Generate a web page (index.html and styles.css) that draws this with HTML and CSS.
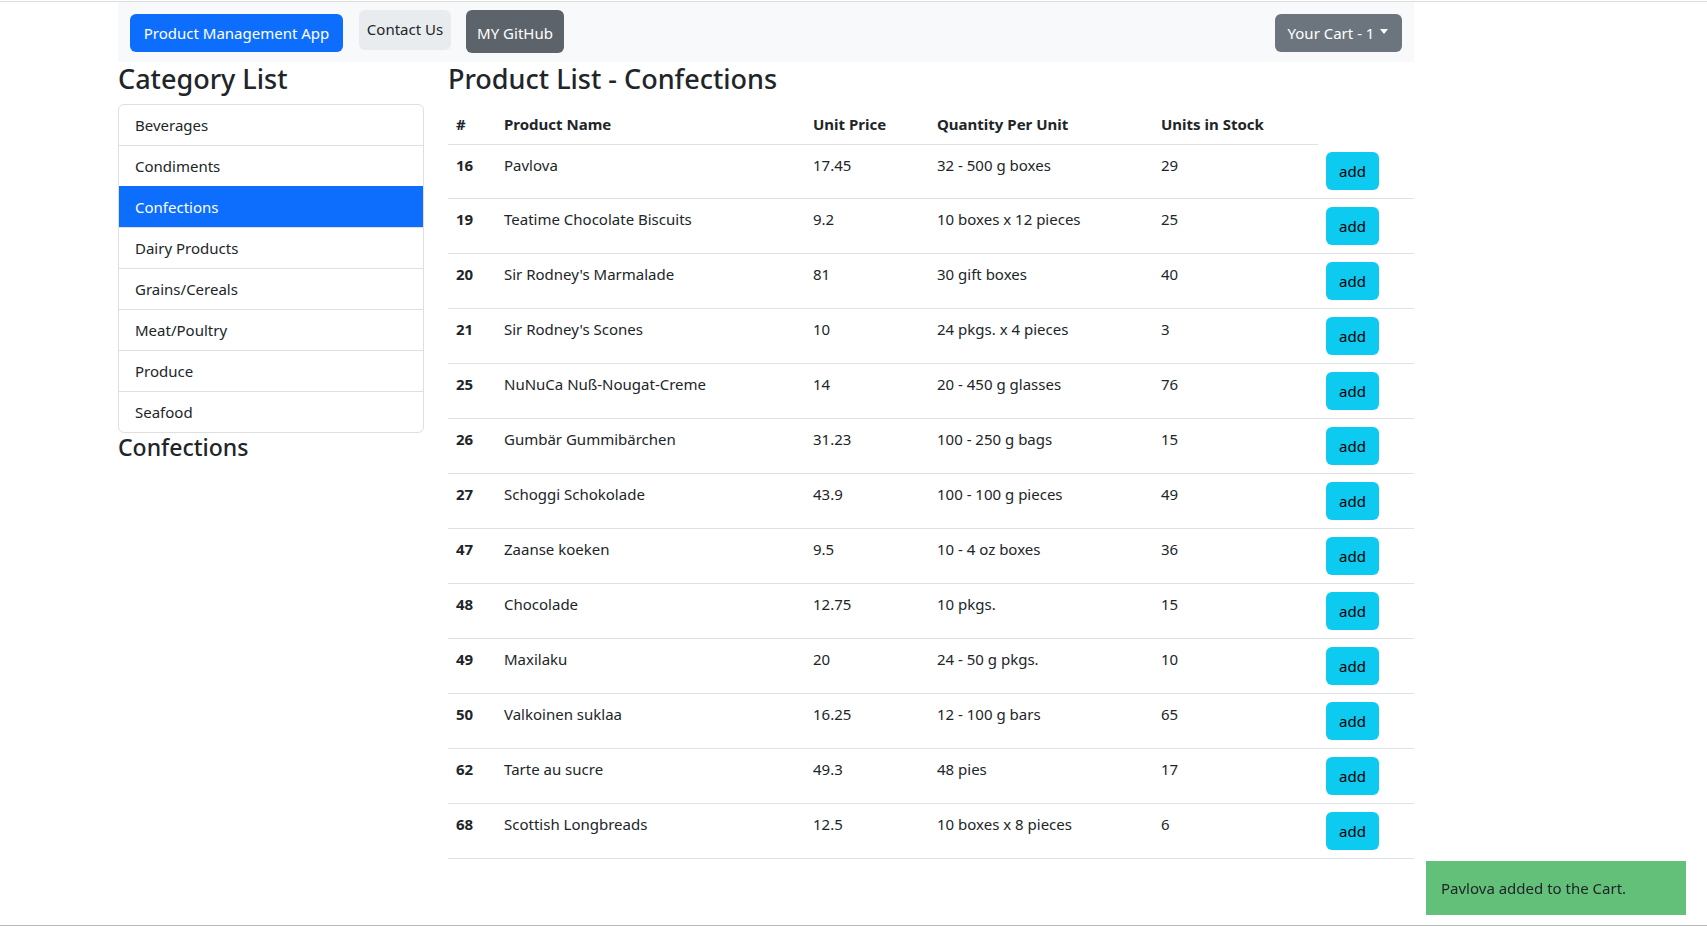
FILE: index.html
```html
<!DOCTYPE html>
<html lang="en">
<head>
<meta charset="utf-8">
<title>Product Management App</title>
<link rel="stylesheet" href="styles.css">
</head>
<body>
<div class="topline"></div>
<div class="page">
  <nav class="navbar">
    <a class="btn btn-brand">Product Management App</a>
    <a class="btn btn-contact">Contact Us</a>
    <a class="btn btn-github">MY GitHub</a>
    <div class="spacer"></div>
    <a class="btn btn-cart">Your Cart - 1<span class="caret"></span></a>
  </nav>
  <div class="row">
    <aside class="col-side">
      <h3 class="heading">Category List</h3>
      <ul class="list-group">
        <li class="list-item">Beverages</li>
        <li class="list-item">Condiments</li>
        <li class="list-item active">Confections</li>
        <li class="list-item">Dairy Products</li>
        <li class="list-item">Grains/Cereals</li>
        <li class="list-item">Meat/Poultry</li>
        <li class="list-item">Produce</li>
        <li class="list-item">Seafood</li>
      </ul>
      <h4 class="subheading">Confections</h4>
    </aside>
    <main class="col-main">
      <h3 class="heading">Product List - Confections</h3>
      <table class="table">
        <colgroup>
          <col class="c-id"><col class="c-name"><col class="c-price"><col class="c-qty"><col class="c-stock"><col class="c-add">
        </colgroup>
        <thead>
          <tr><th>#</th><th>Product Name</th><th>Unit Price</th><th>Quantity Per Unit</th><th>Units in Stock</th></tr>
        </thead>
        <tbody>
          <tr><th>16</th><td>Pavlova</td><td>17.45</td><td>32 - 500 g boxes</td><td>29</td><td><button class="btn-add">add</button></td></tr>
          <tr><th>19</th><td>Teatime Chocolate Biscuits</td><td>9.2</td><td>10 boxes x 12 pieces</td><td>25</td><td><button class="btn-add">add</button></td></tr>
          <tr><th>20</th><td>Sir Rodney's Marmalade</td><td>81</td><td>30 gift boxes</td><td>40</td><td><button class="btn-add">add</button></td></tr>
          <tr><th>21</th><td>Sir Rodney's Scones</td><td>10</td><td>24 pkgs. x 4 pieces</td><td>3</td><td><button class="btn-add">add</button></td></tr>
          <tr><th>25</th><td>NuNuCa Nuß-Nougat-Creme</td><td>14</td><td>20 - 450 g glasses</td><td>76</td><td><button class="btn-add">add</button></td></tr>
          <tr><th>26</th><td>Gumbär Gummibärchen</td><td>31.23</td><td>100 - 250 g bags</td><td>15</td><td><button class="btn-add">add</button></td></tr>
          <tr><th>27</th><td>Schoggi Schokolade</td><td>43.9</td><td>100 - 100 g pieces</td><td>49</td><td><button class="btn-add">add</button></td></tr>
          <tr><th>47</th><td>Zaanse koeken</td><td>9.5</td><td>10 - 4 oz boxes</td><td>36</td><td><button class="btn-add">add</button></td></tr>
          <tr><th>48</th><td>Chocolade</td><td>12.75</td><td>10 pkgs.</td><td>15</td><td><button class="btn-add">add</button></td></tr>
          <tr><th>49</th><td>Maxilaku</td><td>20</td><td>24 - 50 g pkgs.</td><td>10</td><td><button class="btn-add">add</button></td></tr>
          <tr><th>50</th><td>Valkoinen suklaa</td><td>16.25</td><td>12 - 100 g bars</td><td>65</td><td><button class="btn-add">add</button></td></tr>
          <tr><th>62</th><td>Tarte au sucre</td><td>49.3</td><td>48 pies</td><td>17</td><td><button class="btn-add">add</button></td></tr>
          <tr><th>68</th><td>Scottish Longbreads</td><td>12.5</td><td>10 boxes x 8 pieces</td><td>6</td><td><button class="btn-add">add</button></td></tr>
        </tbody>
      </table>
    </main>
  </div>
</div>
<div class="toast">Pavlova added to the Cart.</div>
<div class="bottomline"></div>
</body>
</html>
```

FILE: styles.css
```css
* { box-sizing: border-box; }
html, body { margin: 0; padding: 0; }
body {
  font-family: "Noto Sans", "Open Sans", sans-serif;
  font-size: 15px;
  line-height: 24px;
  color: #212529;
  background: #fff;
}
.topline { height: 1px; margin-top: 1px; background: #dcdcdc; }
.page { width: 1296px; margin-left: 118px; }

.navbar {
  display: flex;
  align-items: flex-start;
  height: 60px;
  padding: 0 12px;
  background: #f8f9fa;
}
.spacer { flex: 1; }
.btn {
  display: inline-flex;
  align-items: center;
  justify-content: center;
  border-radius: 6px;
  white-space: nowrap;
  cursor: pointer;
}
.btn-brand { margin-top: 11.5px; width: 213px; height: 38px; background: #0d6efd; color: #fff; }
.btn-contact { margin-top: 8px; margin-left: 16px; width: 92px; height: 40px; background: #e9ecef; color: #212529; padding-bottom: 2px; }
.btn-github { margin-top: 8px; margin-left: 15px; width: 98px; height: 43px; background: #5c636a; color: #fff; padding-top: 2px; }
.btn-cart { margin-top: 11.5px; margin-right: 0.5px; width: 127px; height: 38px; background: #6c757d; color: #fff; }
.caret {
  display: inline-block;
  margin-left: 6px;
  border-top: 5px solid #fff;
  border-left: 4.5px solid transparent;
  border-right: 4.5px solid transparent;
  transform: translateY(-1px);
}

.row { display: flex; gap: 24px; }
.col-side { width: 306px; flex: none; }
.col-main { width: 966px; flex: none; }

.heading {
  margin: 0 0 8px;
  font-size: 27px;
  line-height: 33.6px;
  font-weight: 500;
  color: #212529;
}
.subheading {
  margin: 0 0 8px;
  font-size: 23px;
  line-height: 28.8px;
  font-weight: 500;
  color: #212529;
}

.list-group {
  list-style: none;
  margin: 0;
  padding: 0;
  border: 1px solid #dfdfdf;
  border-radius: 6px;
  overflow: hidden;
}
.list-item {
  padding: 8px 16px;
  line-height: 24px;
  border-top: 1px solid #dfdfdf;
}
.list-item:first-child { border-top: 0; }
.list-item.active { background: #0d6efd; color: #fff; border-top-color: #0d6efd; }

.table {
  width: 966px;
  border-collapse: collapse;
  table-layout: fixed;
}
.c-id { width: 48px; }
.c-name { width: 309px; }
.c-price { width: 124px; }
.c-qty { width: 224px; }
.c-stock { width: 165px; }
.c-add { width: 96px; }
.table th, .table td {
  padding: 8px;
  text-align: left;
  vertical-align: top;
  line-height: 24px;
}
.table thead th { border-bottom: 1px solid #dee2e6; font-weight: 700; vertical-align: bottom; }
.table tbody th, .table tbody td { border-bottom: 1px solid #dee2e6; }
.table tbody th { font-weight: 700; }
.btn-add {
  display: block;
  width: 53px;
  height: 38px;
  padding: 0;
  border: 0;
  border-radius: 6px;
  background: #0dcaf0;
  color: #000;
  font: inherit;
  cursor: pointer;
}

.toast {
  position: fixed;
  right: 21px;
  bottom: 11px;
  width: 260px;
  padding: 15px;
  background: rgba(91, 189, 114, 0.95);
  color: #212529;
  line-height: 24px;
}
.bottomline {
  position: fixed;
  left: 0;
  right: 0;
  bottom: 0;
  height: 1px;
  background: #b9b9b9;
}
```
